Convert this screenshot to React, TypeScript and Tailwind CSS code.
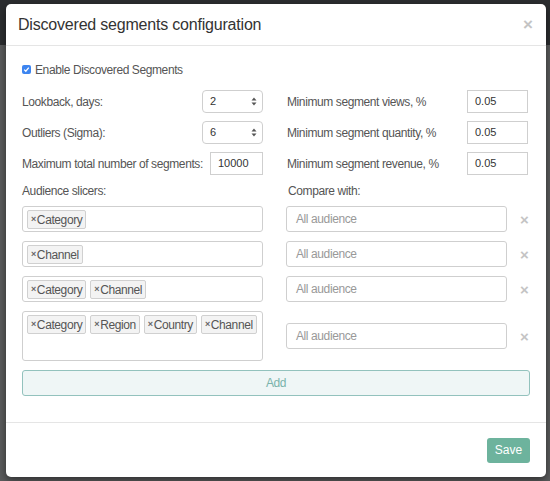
import React from "react";

const font = { fontFamily: '"Liberation Sans", Arial, sans-serif' };

const rows = [
	["Category"],
	["Channel"],
	["Category", "Channel"],
	["Category", "Region", "Country", "Channel"],
];

const Tag = ({ label }: { label: string }) => (
	<span className="flex items-center h-[19px] px-[3px] rounded-[2px] border border-[#d0d0d0] bg-[#f3f3f3] text-[12px] tracking-[-0.4px] text-[#555] leading-none">
		<span className="text-[9px] text-[#666] mr-[1px] font-bold">×</span>
		{label}
	</span>
);

const SelectBox = ({ value }: { value: string }) => (
	<div className="w-[61px] h-[23px] rounded-[4px] border border-[#cfcfcf] bg-white flex items-center justify-between pl-[7px] pr-[5px] text-[11px] text-[#333]">
		<span>{value}</span>
		<svg width="6" height="9" viewBox="0 0 6 9">
			<path d="M3 0.5 L5.5 3.5 H0.5 Z" fill="#555" />
			<path d="M3 8.5 L5.5 5.5 H0.5 Z" fill="#555" />
		</svg>
	</div>
);

const NumInput = ({ value, w }: { value: string; w: string }) => (
	<div className={`${w} h-[23px] border border-[#cfcfcf] bg-white flex items-center pl-[7px] text-[11px] tracking-normal text-[#333]`}>
		{value}
	</div>
);

const App = () => {
	return (
		<div className="w-[550px] h-[481px] bg-[#5b5c5d] flex flex-col relative overflow-hidden" style={font}>
			<div className="h-[45px] bg-[#2c2e30]" />
			<div className="absolute left-[6px] top-[4px] w-[540px] h-[473px] bg-white rounded-[5px] shadow-[0_3px_9px_rgba(0,0,0,0.5)] flex flex-col">
				<div className="h-[42px] border-b border-[#e5e5e5] flex items-center justify-between pl-[12px] pr-[13px]">
					<h4 className="text-[16px] tracking-[-0.2px] text-[#333] pt-[1px]">Discovered segments configuration</h4>
					<span className="text-[17px] text-[#c4c4c4] font-bold leading-none">×</span>
				</div>
				<div className="flex-1 px-[16px] pt-[17px] text-[12px] tracking-[-0.4px] text-[#555] whitespace-nowrap">
					<div className="flex items-center gap-[4px] h-[13px]">
						<span className="w-[9px] h-[9px] rounded-[2px] bg-[#3d85f0] flex items-center justify-center">
							<svg width="7" height="7" viewBox="0 0 7 7">
								<path d="M1.2 3.6 L2.8 5.2 L5.8 1.6" stroke="white" strokeWidth="1.3" fill="none" />
							</svg>
						</span>
						<span>Enable Discovered Segments</span>
					</div>
					<div className="grid grid-cols-[241px_1fr] gap-x-[24px] mt-[14px]">
						<div className="flex flex-col gap-[8px]">
							<div className="flex items-center justify-between h-[23px]">
								<span>Lookback, days:</span>
								<SelectBox value="2" />
							</div>
							<div className="flex items-center justify-between h-[23px]">
								<span>Outliers (Sigma):</span>
								<SelectBox value="6" />
							</div>
							<div className="flex items-center justify-between h-[23px]">
								<span>Maximum total number of segments:</span>
								<NumInput value="10000" w="w-[53px]" />
							</div>
						</div>
						<div className="flex flex-col gap-[8px] pr-[2px]">
							<div className="flex items-center justify-between h-[23px]">
								<span>Minimum segment views, %</span>
								<NumInput value="0.05" w="w-[61px]" />
							</div>
							<div className="flex items-center justify-between h-[23px]">
								<span>Minimum segment quantity, %</span>
								<NumInput value="0.05" w="w-[61px]" />
							</div>
							<div className="flex items-center justify-between h-[23px]">
								<span>Minimum segment revenue, %</span>
								<NumInput value="0.05" w="w-[61px]" />
							</div>
						</div>
					</div>
					<div className="grid grid-cols-[241px_1fr] gap-x-[23px] mt-[10px]">
						<span className="h-[13px] leading-[13px]">Audience slicers:</span>
						<span className="h-[13px] leading-[13px] pl-[2px]">Compare with:</span>
					</div>
					<div className="flex flex-col gap-[9px] mt-[8px]">
						{rows.map((tags, i) => (
							<div key={i} className="grid grid-cols-[241px_1fr] gap-x-[23px] items-center">
								<div
									className={`border border-[#cfcfcf] rounded-[3px] flex items-start gap-[4px] px-[4px] pt-[3px] ${
										tags.length > 3 ? "h-[50px]" : "h-[26px]"
									}`}>
									{tags.map((t) => (
										<Tag key={t} label={t} />
									))}
								</div>
								<div className="flex items-center">
									<div className="w-[221px] h-[26px] border border-[#cfcfcf] rounded-[3px] flex items-center pl-[9px] text-[#999]">
										All audience
									</div>
									<span className="ml-[13px] text-[15px] text-[#c4c4c4] font-bold leading-none">×</span>
								</div>
							</div>
						))}
					</div>
					<button className="mt-[9px] w-full h-[26px] rounded-[3px] border border-[#93c2bd] bg-[#eff6f6] text-[#7ab3ab] text-[12px]">
						Add
					</button>
				</div>
				<div className="h-[55px] border-t border-[#e5e5e5] flex items-center justify-end pr-[16px]">
					<button className="w-[43px] h-[25px] rounded-[3px] bg-[#6db39d] text-white text-[12px]">Save</button>
				</div>
			</div>
		</div>
	);
};

export default App;
